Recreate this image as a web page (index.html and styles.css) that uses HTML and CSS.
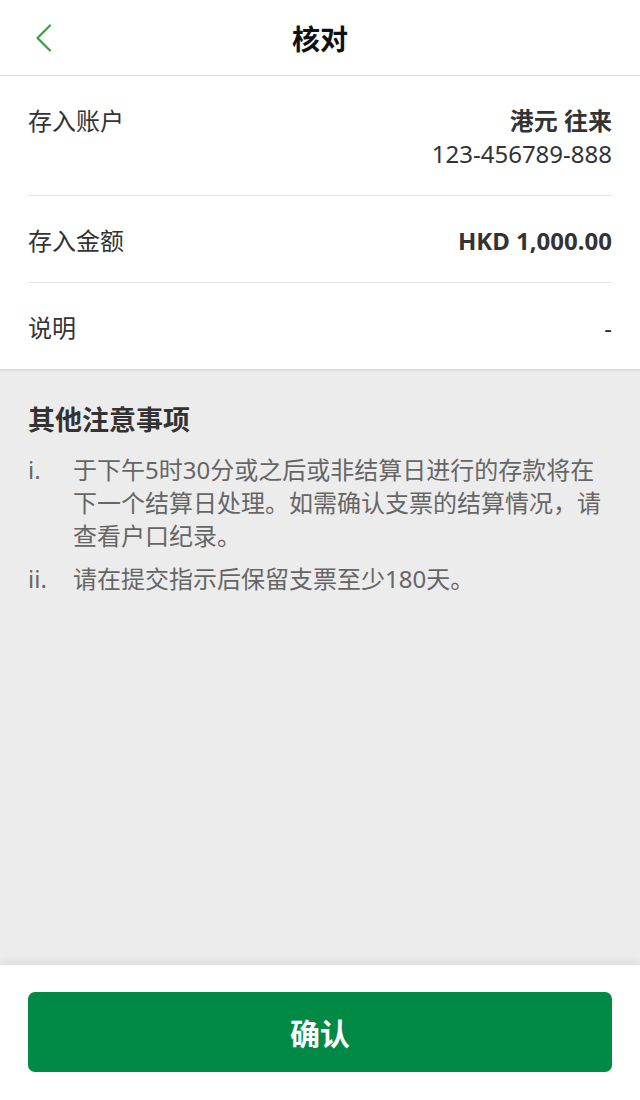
FILE: index.html
```html
<!DOCTYPE html>
<html lang="zh-CN">
<head>
<meta charset="utf-8">
<title>核对</title>
<link rel="stylesheet" href="styles.css">
</head>
<body>
<div class="page">
  <header class="topbar">
    <button class="back" aria-label="返回">
      <svg width="18" height="28" viewBox="0 0 18 28"><path d="M15 1.5 L2.5 14 L15 26.5" fill="none" stroke="#3a9f48" stroke-width="2.2" stroke-linecap="round" stroke-linejoin="round"/></svg>
    </button>
    <h1 class="title">核对</h1>
  </header>

  <section class="details">
    <div class="row">
      <div class="label">存入账户</div>
      <div class="value">
        <div class="strong">港元 往来</div>
        <div>123-456789-888</div>
      </div>
    </div>
    <div class="row">
      <div class="label">存入金额</div>
      <div class="value strong">HKD 1,000.00</div>
    </div>
    <div class="row">
      <div class="label">说明</div>
      <div class="value">-</div>
    </div>
  </section>

  <section class="notes">
    <h2 class="notes-title">其他注意事项</h2>
    <ol class="notes-list">
      <li><span class="marker">i.</span><span class="note-text">于下午5时30分或之后或非结算日进行的存款将在下一个结算日处理。如需确认支票的结算情况，请查看户口纪录。</span></li>
      <li><span class="marker">ii.</span><span class="note-text">请在提交指示后保留支票至少180天。</span></li>
    </ol>
  </section>

  <footer class="footer">
    <button class="confirm">确认</button>
  </footer>
</div>
</body>
</html>
```

FILE: styles.css
```css
* { box-sizing: border-box; }
html, body { margin: 0; padding: 0; }
body {
  font-family: "Noto Sans", "Noto Sans CJK SC", sans-serif;
  color: #333;
  background: #ececec;
}
.page {
  width: 640px;
  height: 1100px;
  display: flex;
  flex-direction: column;
}
.topbar {
  height: 76px;
  background: #fff;
  border-bottom: 1px solid #d6d6d6;
  display: flex;
  align-items: center;
  justify-content: center;
  position: relative;
  flex: none;
}
.back {
  position: absolute;
  left: 35px;
  top: 24px;
  width: 20px;
  height: 28px;
  padding: 0;
  border: 0;
  background: none;
  display: flex;
}
.title {
  margin: 0;
  font-size: 28px;
  font-weight: 700;
  color: #111;
  line-height: 1;
  padding-top: 2px;
}
.details {
  background: #fff;
  padding: 0 28px;
  border-bottom: 2px solid #dcdcdc;
  flex: none;
}
.row {
  display: flex;
  justify-content: space-between;
  padding: 28px 0 25px;
  font-size: 24px;
  line-height: 33px;
  border-bottom: 1px solid #e4e4e4;
}
.row:last-child { border-bottom: 0; }
.label { color: #333; }
.value { text-align: right; color: #333; }
.strong { font-weight: 700; }
.notes {
  flex: 1;
  padding: 30px 28px 0;
  background: #ececec;
}
.notes-title {
  margin: 0 0 14px;
  font-size: 27px;
  font-weight: 700;
  line-height: 38px;
  color: #333;
}
.notes-list {
  list-style: none;
  margin: 0;
  padding: 0;
  color: #666;
  font-size: 24px;
  line-height: 33px;
}
.notes-list li {
  display: flex;
  margin-bottom: 10px;
}
.marker { width: 45px; flex: none; }
.note-text { flex: 1; }
.footer {
  flex: none;
  height: 135px;
  background: #fff;
  padding: 27px 28px 0;
  box-shadow: 0 -4px 8px rgba(0,0,0,0.06);
}
.confirm {
  width: 100%;
  height: 80px;
  border: 0;
  border-radius: 7px;
  background: #008a45;
  color: #fff;
  font-family: "Noto Sans", "Noto Sans CJK SC", sans-serif;
  font-size: 30px;
  font-weight: 700;
}
```
